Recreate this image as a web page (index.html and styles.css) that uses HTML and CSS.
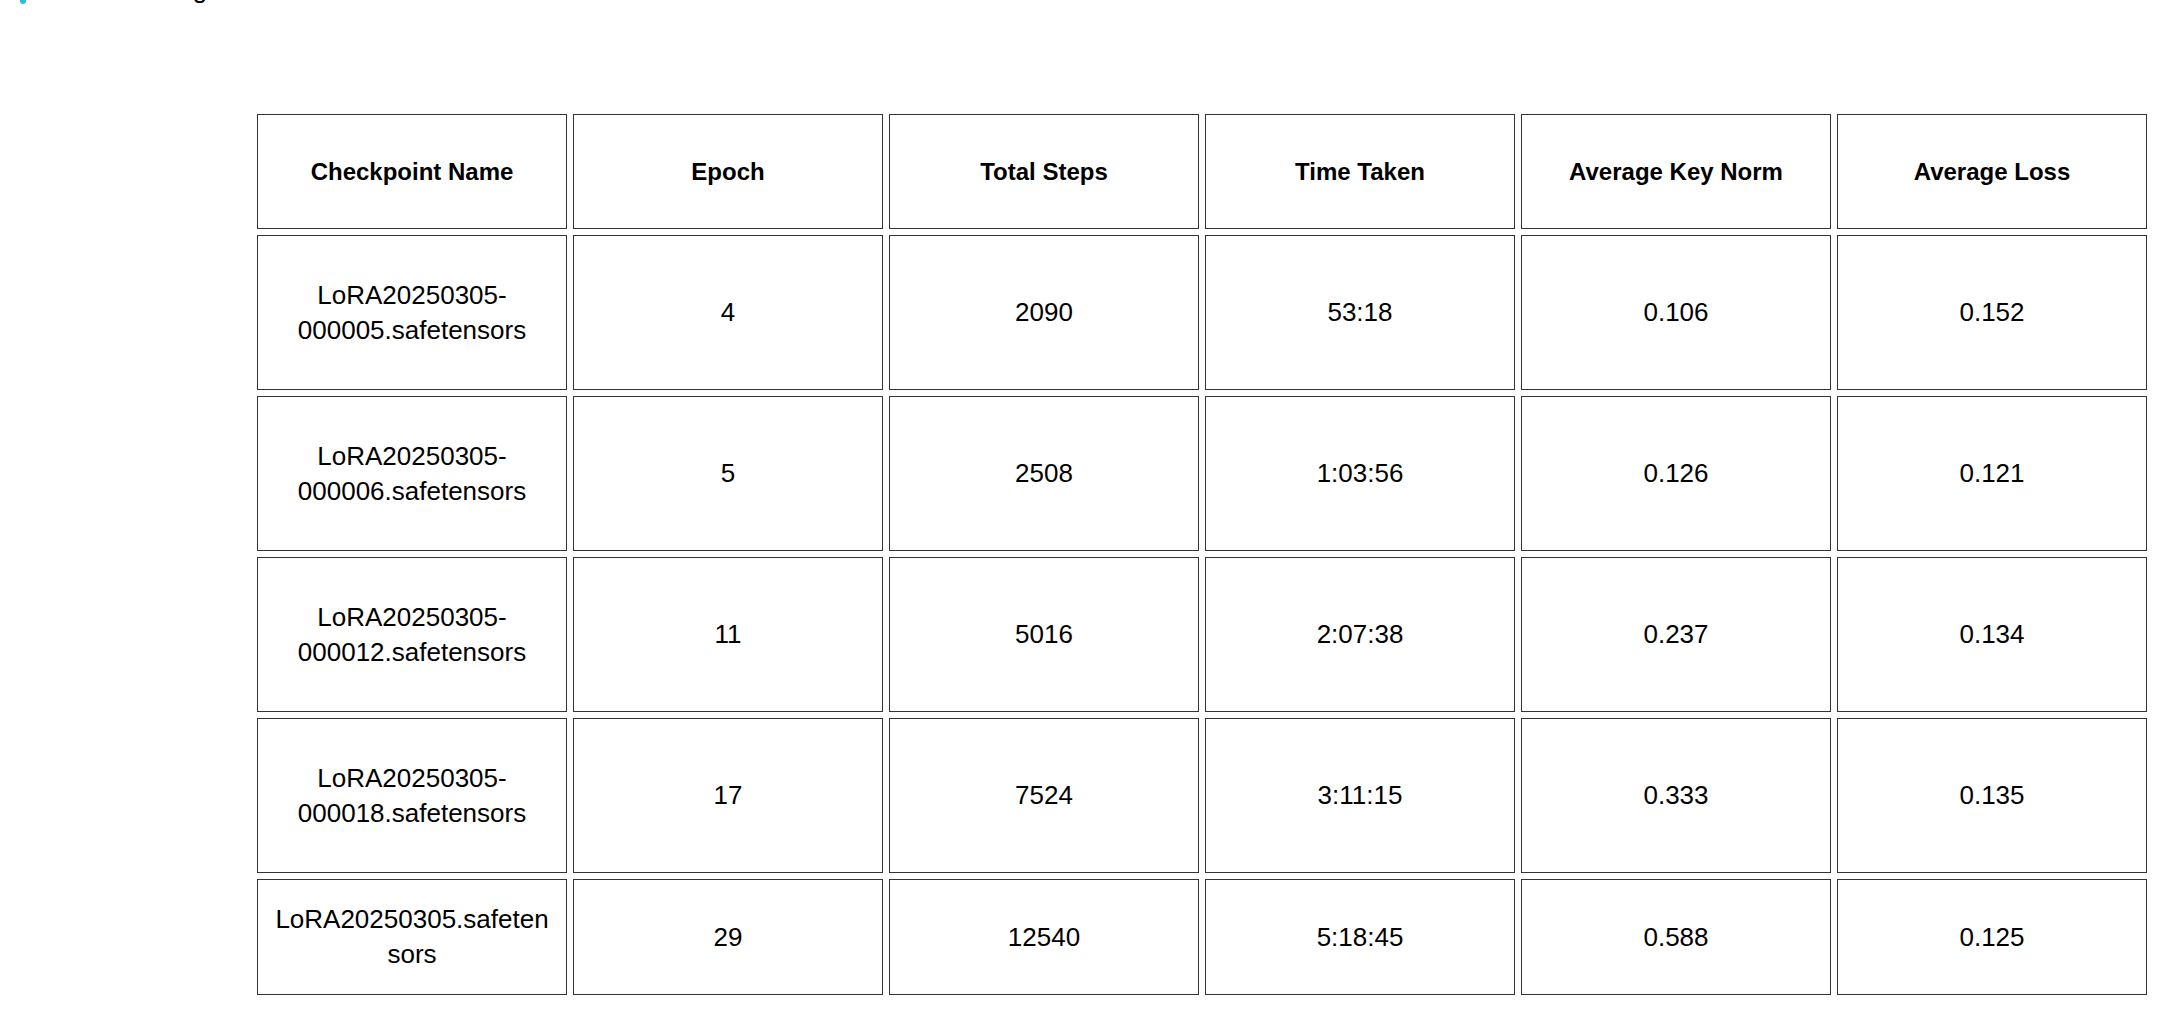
FILE: index.html
```html
<!DOCTYPE html>
<html lang="en">
<head>
    <meta charset="UTF-8">
    <meta name="viewport" content="width=device-width, initial-scale=1.0">
    <title>LoRA Training Results</title>
    <link rel="stylesheet" href="styles.css">
</head>
<body>
    <h2 class="page-title">
        <svg class="title-icon" width="10" height="30" viewBox="0 0 10 30"><rect x="2" y="4" width="6" height="26" rx="3" fill="#2bbde8"/></svg>
        <span>LoRA Training Results</span>
    </h2>

    <main class="container">
        <table class="results">
            <thead>
                <tr class="head-row">
                    <th>Checkpoint Name</th>
                    <th>Epoch</th>
                    <th>Total Steps</th>
                    <th>Time Taken</th>
                    <th>Average Key Norm</th>
                    <th>Average Loss</th>
                </tr>
            </thead>
            <tbody>
                <tr>
                    <td>LoRA20250305-000005.safetensors</td>
                    <td>4</td>
                    <td>2090</td>
                    <td>53:18</td>
                    <td>0.106</td>
                    <td>0.152</td>
                </tr>
                <tr>
                    <td>LoRA20250305-000006.safetensors</td>
                    <td>5</td>
                    <td>2508</td>
                    <td>1:03:56</td>
                    <td>0.126</td>
                    <td>0.121</td>
                </tr>
                <tr>
                    <td>LoRA20250305-000012.safetensors</td>
                    <td>11</td>
                    <td>5016</td>
                    <td>2:07:38</td>
                    <td>0.237</td>
                    <td>0.134</td>
                </tr>
                <tr>
                    <td>LoRA20250305-000018.safetensors</td>
                    <td>17</td>
                    <td>7524</td>
                    <td>3:11:15</td>
                    <td>0.333</td>
                    <td>0.135</td>
                </tr>
                <tr class="last-row">
                    <td>LoRA20250305.safetensors</td>
                    <td>29</td>
                    <td>12540</td>
                    <td>5:18:45</td>
                    <td>0.588</td>
                    <td>0.125</td>
                </tr>
            </tbody>
        </table>
    </main>
</body>
</html>
```

FILE: styles.css
```css
* {
    margin: 0;
    padding: 0;
    box-sizing: border-box;
}

body {
    font-family: 'Liberation Sans', Arial, sans-serif;
    color: #000;
    background-color: #fff;
}

/* heading sits mostly above the visible area */
.page-title {
    display: flex;
    align-items: flex-end;
    gap: 16px;
    margin-top: -26px;
    padding-left: 18px;
    height: 30px;
    font-size: 26px;
    font-weight: normal;
    line-height: 30px;
}

.title-icon {
    display: block;
    flex: none;
}

.container {
    padding: 104px 0 0 251px;
}

.results {
    width: 1902px;
    table-layout: fixed;
    border-collapse: separate;
    border-spacing: 6px;
}

.results th,
.results td {
    border: 1px solid #333;
    padding: 0 12px;
    text-align: center;
    vertical-align: middle;
    overflow-wrap: break-word;
}

.results th {
    font-size: 24px;
    font-weight: bold;
    line-height: 30px;
}

.results td {
    font-size: 26px;
    line-height: 35px;
}

.head-row {
    height: 115px;
}

.results tbody tr {
    height: 155px;
}

.results tbody tr.last-row {
    height: 116px;
}
```
